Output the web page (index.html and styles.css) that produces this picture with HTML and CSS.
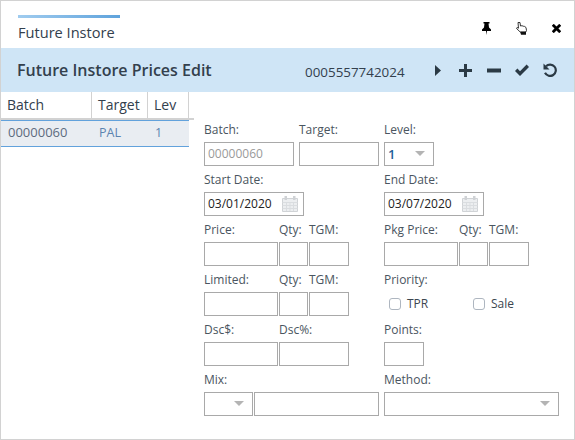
FILE: index.html
```html
<!DOCTYPE html>
<html lang="en">
<head>
    <meta charset="UTF-8">
    <title>Future Instore</title>
    <link rel="stylesheet" href="styles.css">
</head>
<body>
    <div class="window">
        <div class="tabbar">
            <div class="tab">Future Instore</div>
            <div class="win-icons">
                <svg class="ico-pin" width="9" height="13" viewBox="0 0 9 13"><path fill="#000" d="M1.500 0h6v1.500H6.500L7 5.500 9 7.500V9H5L4.500 13 4 9H0V7.500L2 5.500 2.500 1.500H1.500z"/></svg>
                <svg class="ico-hand" width="11" height="13" viewBox="0 0 11 13"><path fill="#fff" stroke="#222" stroke-width=".9" d="M2 .5H4L4.500 4 6 3.700 7.200 4.200 8.500 4.400 10 5.500 10.500 8.500 9.800 10H4.200L.5 6.500 1 5.500 2.500 6.200z"/><path fill="#111" d="M4.200 9.800H10V12.800H5z"/></svg>
                <svg class="ico-x" width="9" height="9" viewBox="0 0 9 9"><path stroke="#000" stroke-width="2.800" d="M.8.800l7.400 7.400M8.200.800L.8 8.200"/></svg>
            </div>
        </div>
        <div class="titlebar">
            <div class="title">Future Instore Prices Edit</div>
            <div class="upc">0005557742024</div>
            <div class="tools">
                <svg class="ico-play" width="7" height="11" viewBox="0 0 7 11"><path fill="#2b3a45" d="M0 0l6 5.500L0 11z"/></svg>
                <svg width="13" height="13" viewBox="0 0 13 13"><path fill="#2b3a45" d="M5 0h3v5h5v3H8v5H5V8H0V5h5z"/></svg>
                <svg width="15" height="13" viewBox="0 0 15 13"><path fill="#2b3a45" d="M1 4.500h14v4H1z"/></svg>
                <svg width="14" height="12" viewBox="0 0 14 12"><path fill="none" stroke="#2b3a45" stroke-width="3.400" d="M1.200 5.800l3.800 3.800L12.800 1.800"/></svg>
                <svg width="14" height="14" viewBox="0 0 14 14"><path fill="none" stroke="#2b3a45" stroke-width="2.200" d="M3 3.300A5.700 5.700 0 1 1 2 9.800"/><path fill="#2b3a45" d="M0.500 0.500L6.500 6.500H0.500z"/></svg>
            </div>
        </div>
        <div class="content">
            <div class="grid-side">
                <div class="grid-head">
                    <div class="col-batch">Batch</div>
                    <div class="col-target">Target</div>
                    <div class="col-lev">Lev</div>
                </div>
                <div class="grid-row">
                    <div class="col-batch">00000060</div>
                    <div class="col-target">PAL</div>
                    <div class="col-lev">1</div>
                </div>
            </div>
            <div class="form">
                <div class="cell">
                    <div class="field w90"><label>Batch:</label><div class="box ro">00000060</div></div>
                    <div class="field w80 gap"><label>Target:</label><div class="box"></div></div>
                </div>
                <div class="cell">
                    <div class="field w50"><label>Level:</label><div class="box sel val">1<i class="arrow"></i></div></div>
                </div>
                <div class="cell">
                    <div class="field w100"><label>Start Date:</label><div class="box date">03/01/2020
                        <svg class="cal" width="16" height="16" viewBox="0 0 16 16"><use href="#cal"/></svg></div></div>
                </div>
                <div class="cell">
                    <div class="field w100"><label>End Date:</label><div class="box date">03/07/2020
                        <svg class="cal" width="16" height="16" viewBox="0 0 16 16"><use href="#cal"/></svg></div></div>
                </div>
                <div class="cell">
                    <div class="field w74"><label>Price:</label><div class="box"></div></div>
                    <div class="field w29"><label>Qty:</label><div class="box"></div></div>
                    <div class="field w40"><label>TGM:</label><div class="box"></div></div>
                </div>
                <div class="cell">
                    <div class="field w74"><label>Pkg Price:</label><div class="box"></div></div>
                    <div class="field w29"><label>Qty:</label><div class="box"></div></div>
                    <div class="field w40"><label>TGM:</label><div class="box"></div></div>
                </div>
                <div class="cell">
                    <div class="field w74"><label>Limited:</label><div class="box"></div></div>
                    <div class="field w29"><label>Qty:</label><div class="box"></div></div>
                    <div class="field w40"><label>TGM:</label><div class="box"></div></div>
                </div>
                <div class="cell">
                    <div class="field wfull"><label>Priority:</label>
                        <div class="checks">
                            <div class="check w84"><i class="cb"></i>TPR</div>
                            <div class="check"><i class="cb"></i>Sale</div>
                        </div>
                    </div>
                </div>
                <div class="cell">
                    <div class="field w74"><label>Dsc$:</label><div class="box"></div></div>
                    <div class="field w70"><label>Dsc%:</label><div class="box"></div></div>
                </div>
                <div class="cell">
                    <div class="field w40"><label>Points:</label><div class="box"></div></div>
                </div>
                <div class="cell">
                    <div class="field w49"><label>Mix:</label><div class="box sel"><i class="arrow"></i></div></div>
                    <div class="field w125"><label>&nbsp;</label><div class="box"></div></div>
                </div>
                <div class="cell">
                    <div class="field wfull"><label>Method:</label><div class="box sel"><i class="arrow"></i></div></div>
                </div>
            </div>
        </div>
    </div>
    <svg class="defs" width="0" height="0">
        <symbol id="cal" viewBox="0 0 16 16">
            <path fill="#eceef0" stroke="#d0d3d6" d="M.5 2.500h15v13H.5z"/>
            <path stroke="#dadde0" d="M.5 6.500h15M.5 9.500h15M.5 12.500h15M4.500 6v9M8 6v9M11.500 6v9"/>
            <path fill="#cfd2d5" d="M2.500 0h2.500v4H2.500zM11 0h2.500v4H11z"/>
        </symbol>
    </svg>
</body>
</html>
```

FILE: styles.css
```css
* {
    box-sizing: border-box;
}

html, body {
    margin: 0;
    padding: 0;
}

body {
    font-family: "Open Sans", sans-serif;
    color: #3c4650;
    background: #fff;
}

.window {
    width: 575px;
    height: 440px;
    border: 1px solid #d2d2d2;
    overflow: hidden;
}

.defs {
    position: absolute;
}

/* Top tab strip */
.tabbar {
    height: 47px;
    display: flex;
    justify-content: space-between;
    padding: 14px 0 0 17px;
}

.tab {
    width: 102px;
    height: 33px;
    padding-top: 3px;
    background: linear-gradient(to right, #a0ccef, #5fa3dc) top / 100% 3px no-repeat;
    font-size: 14.600px;
    line-height: 28px;
    color: #33404d;
}

.win-icons {
    display: flex;
    align-items: center;
    height: 27px;
    padding-right: 13px;
}

.ico-hand {
    margin-left: 25px;
}

.ico-x {
    margin-left: 25px;
}

/* Blue title band */
.titlebar {
    height: 44px;
    background: #cfe5f6;
    display: flex;
    align-items: center;
    padding-left: 16px;
}

.title {
    width: 288px;
    font-size: 16px;
    font-weight: 600;
    color: #33404d;
}

.upc {
    width: 130px;
    font-size: 13.400px;
    color: #33404d;
    padding-top: 3px;
}

.tools {
    display: flex;
    align-items: center;
    gap: 14px;
}

.ico-play {
    margin-right: 3px;
}

/* Lower part */
.content {
    display: flex;
}

.grid-side {
    width: 193px;
}

.grid-head {
    display: flex;
    width: 193px;
    height: 28px;
    border-bottom: 2px solid #d2d2d2;
    font-size: 14px;
    line-height: 26px;
    color: #33404d;
}

.grid-head > div {
    border-right: 1px solid #d2d2d2;
    padding-left: 6px;
}

.grid-row {
    display: flex;
    width: 188px;
    height: 27px;
    background: #e9edf2;
    border-top: 1px solid #62a2dc;
    border-bottom: 1px solid #62a2dc;
    font-size: 13px;
    line-height: 23px;
    color: #5d6b7e;
}

.grid-row > div {
    padding-left: 7px;
}

.grid-row .col-target,
.grid-row .col-lev {
    font-size: 12.500px;
    color: #5b84b0;
}

.col-batch {
    width: 91px;
}

.col-target {
    width: 56px;
}

.col-lev {
    width: 41px;
}

/* Edit form */
.form {
    display: grid;
    grid-template-columns: 175px 175px;
    column-gap: 5px;
    grid-auto-rows: 50px;
    padding: 24px 0 0 10px;
}

.cell {
    display: flex;
    gap: 1px;
}

.field {
    display: flex;
    flex-direction: column;
}

.field label {
    height: 26px;
    font-size: 12px;
    line-height: 28px;
    color: #4a5560;
    white-space: nowrap;
}

.w90 { width: 90px; }
.w80 { width: 80px; }
.w50 { width: 50px; }
.w100 { width: 100px; }
.w74 { width: 74px; }
.w29 { width: 29px; }
.w40 { width: 40px; }
.w70 { width: 70px; }
.w49 { width: 49px; }
.w125 { width: 125px; }
.wfull { width: 175px; }

.gap {
    margin-left: 4px;
}

.box {
    position: relative;
    height: 24px;
    border: 1px solid #a9a9a9;
    background: #fff;
    font-size: 12px;
    line-height: 22px;
    padding-left: 3px;
    overflow: hidden;
}

.ro {
    color: #9a9a9a;
}

.val {
    color: #1f5f99;
    font-size: 13px;
    font-weight: 600;
}

.date {
    color: #222;
    display: flex;
    align-items: center;
    justify-content: space-between;
    padding-right: 5px;
}

.arrow {
    position: absolute;
    right: 8px;
    top: 8px;
    width: 0;
    height: 0;
    border-left: 5px solid transparent;
    border-right: 5px solid transparent;
    border-top: 5px solid #b4b4b4;
}

.checks {
    display: flex;
    padding: 4px 0 0 5px;
}

.check {
    display: flex;
    align-items: center;
    font-size: 12px;
    line-height: 16px;
    color: #3c4650;
}

.w84 {
    width: 84px;
}

.cb {
    width: 12px;
    height: 12px;
    border: 1px solid #aeb6c0;
    border-radius: 3px;
    margin-right: 6px;
}
```
